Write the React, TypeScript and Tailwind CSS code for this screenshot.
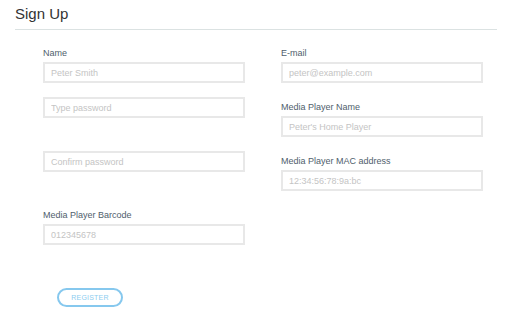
import React from "react";

type FieldProps = {
  label?: string;
  placeholder: string;
  type?: string;
  className?: string;
};

function Field({ label, placeholder, type = "text", className = "" }: FieldProps) {
  return (
    <div className={`flex flex-col ${className}`}>
      {label && (
        <label className="h-[12px] mb-[3px] text-[9px] leading-[12px] text-[#4f5e6c]">{label}</label>
      )}
      <input
        type={type}
        placeholder={placeholder}
        className="h-[21px] w-[202px] border-2 border-[#e8e8e8] bg-white pl-[6px] text-[9px] text-[#555] outline-none placeholder:text-[#c4c4c4]"
      />
    </div>
  );
}

export default function App() {
  return (
    <div className="w-[512px] h-[333px] bg-white overflow-hidden font-['Liberation_Sans',Arial,sans-serif]">
      {/* Header */}
      <div className="mx-[15px] pt-[3px] pb-[5px] border-b border-[#dbe2e2]">
        <h1 className="text-[15px] leading-[21px] text-[#333] font-normal">Sign Up</h1>
      </div>

      {/* Form */}
      <form className="pl-[43px] pt-[17px]" onSubmit={(e) => e.preventDefault()}>
        <div className="flex gap-x-[36px]">
          <div className="flex flex-col">
            <Field label="Name" placeholder="Peter Smith" />
            <Field placeholder="Type password" type="password" className="mt-[14px]" />
            <Field placeholder="Confirm password" type="password" className="mt-[33px]" />
            <Field label="Media Player Barcode" placeholder="012345678" className="mt-[37px]" />
          </div>
          <div className="flex flex-col">
            <Field label="E-mail" placeholder="peter@example.com" type="email" />
            <Field label="Media Player Name" placeholder="Peter's Home Player" className="mt-[18px]" />
            <Field label="Media Player MAC address" placeholder="12:34:56:78:9a:bc" className="mt-[18px]" />
          </div>
        </div>

        <button
          type="submit"
          className="ml-[14px] mt-[43px] h-[19px] w-[66px] rounded-full border-2 border-[#86c8ee] text-[7px] leading-none tracking-[0.2px] text-[#8dcdf0] bg-white"
        >
          REGISTER
        </button>
      </form>
    </div>
  );
}
